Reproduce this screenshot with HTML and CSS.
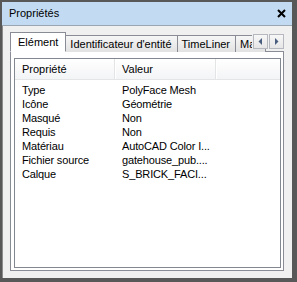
FILE: index.html
```html
<!DOCTYPE html>
<html lang="fr">
<head>
<meta charset="utf-8">
<title>Propriétés</title>
<link rel="stylesheet" href="styles.css">
</head>
<body>
<div class="window">
  <div class="titlebar">
    <span class="title">Propriétés</span>
    <svg class="close" width="9" height="9" viewBox="0 0 9 9"><path d="M1 1L8 8M8 1L1 8" stroke="#000" stroke-width="2"/></svg>
  </div>
  <div class="body">
    <div class="tabs">
      <div class="tab active">Elément</div>
      <div class="tab">Identificateur d'entité</div>
      <div class="tab">TimeLiner</div>
      <div class="tab clipped">Ma</div>
      <div class="scroller">
        <div class="sbtn"><svg width="5" height="7" viewBox="0 0 5 7"><path d="M4 0L0.5 3.5L4 7Z" fill="#4a5f80"/></svg></div>
        <div class="sbtn"><svg width="5" height="7" viewBox="0 0 5 7"><path d="M1 0L4.5 3.5L1 7Z" fill="#4a5f80"/></svg></div>
      </div>
    </div>
    <div class="page">
      <div class="list">
        <div class="header">
          <div class="hcol c1">Propriété</div>
          <div class="hcol c2">Valeur</div>
          <div class="hcol c3"></div>
        </div>
        <div class="rows">
          <div class="row"><div class="cell c1">Type</div><div class="cell c2">PolyFace Mesh</div></div>
          <div class="row"><div class="cell c1">Icône</div><div class="cell c2">Géométrie</div></div>
          <div class="row"><div class="cell c1">Masqué</div><div class="cell c2">Non</div></div>
          <div class="row"><div class="cell c1">Requis</div><div class="cell c2">Non</div></div>
          <div class="row"><div class="cell c1">Matériau</div><div class="cell c2">AutoCAD Color I...</div></div>
          <div class="row"><div class="cell c1">Fichier source</div><div class="cell c2">gatehouse_pub....</div></div>
          <div class="row"><div class="cell c1">Calque</div><div class="cell c2">S_BRICK_FACI...</div></div>
        </div>
      </div>
    </div>
  </div>
</div>
</body>
</html>
```
FILE: styles.css
```css
* { box-sizing: border-box; }
html, body { margin: 0; padding: 0; }
body {
  width: 297px;
  height: 282px;
  background: #f0f0f0;
  font-family: "Liberation Sans", Arial, sans-serif;
  font-size: 11px;
  color: #000;
  overflow: hidden;
}
.window {
  width: 297px;
  height: 282px;
  border-style: solid;
  border-color: #585858;
  border-width: 2px 5px 4px 2px;
  box-shadow: inset 1px 0 0 #8c8c8c;
  display: flex;
  flex-direction: column;
  background: #f0f0f0;
}
.titlebar {
  height: 24px;
  background: #c3dbf2;
  border-bottom: 1px solid #9aa6b2;
  display: flex;
  align-items: center;
  justify-content: space-between;
  padding: 0 6px 1px 7px;
  flex: none;
}
.title { font-size: 11px; }
.close { display: block; margin-top: 1px; }
.body {
  flex: 1;
  display: flex;
  flex-direction: column;
  padding: 6px 8px 7px 8px;
}
.tabs {
  display: flex;
  align-items: flex-end;
  height: 20px;
  position: relative;
  z-index: 1;
  margin-bottom: -1px;
  overflow: hidden;
}
.tab {
  height: 17px;
  padding: 0 5px 0 4px;
  border: 1px solid #898c95;
  border-bottom: none;
  border-left: none;
  background: linear-gradient(#f6f6f6, #e2e2e2);
  white-space: nowrap;
  display: flex;
  align-items: center;
  flex: none;
}
.tab.active {
  height: 20px;
  background: #fff;
  border-left: 1px solid #898c95;
  padding: 0 7px 1px 7px;
  border-bottom: 1px solid #fff;
}
.tab.clipped { width: 30px; }
.scroller {
  position: absolute;
  right: 0;
  top: 2px;
  display: flex;
  gap: 1px;
  background: #f0f0f0;
  padding-left: 1px;
}
.sbtn {
  width: 15px;
  height: 15px;
  border: 1px solid #b5b8be;
  background: linear-gradient(#f7f7f7, #e6e6e6);
  display: flex;
  align-items: center;
  justify-content: center;
}
.page {
  flex: 1;
  border: 1px solid #898c95;
  background: #fff;
  padding: 6px 2px 2px 3px;
  display: flex;
}
.list {
  flex: 1;
  border: 1px solid #828790;
  background: #fff;
}
.header {
  height: 21px;
  display: flex;
  background: linear-gradient(#ffffff, #f3f4f6);
  border-bottom: 1px solid #e4e5e7;
}
.hcol {
  height: 100%;
  display: flex;
  align-items: center;
  padding-left: 7px;
  border-right: 1px solid #e3e4e6;
  box-shadow: 1px 0 0 #fff;
}
.hcol.c3 { flex: 1; border-right: none; box-shadow: none; }
.c1 { width: 100px; }
.c2 { width: 101px; }
.rows { padding-top: 3px; }
.row {
  display: flex;
  height: 14px;
  align-items: center;
  letter-spacing: -0.15px;
}
.cell { padding-left: 7px; white-space: nowrap; overflow: hidden; }
```
